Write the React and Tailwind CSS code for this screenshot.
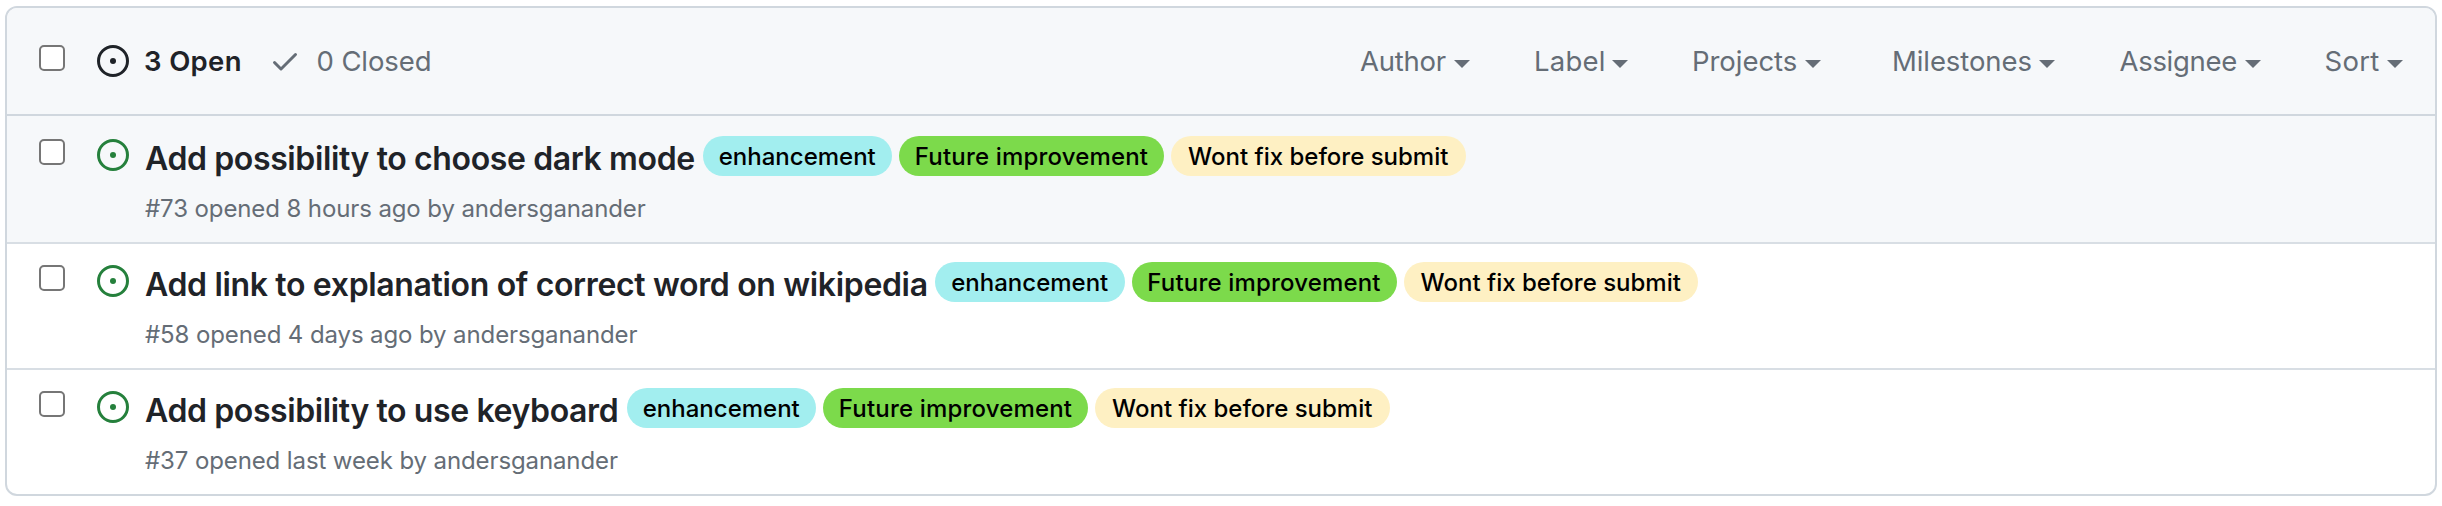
const filters = [
  { name: "Author", box: "w-[110px]", text: "tracking-[-0.25px]" },
  { name: "Label", box: "ml-[64px] w-[94px]", text: "tracking-[0.2px]" },
  { name: "Projects", box: "ml-[64px] w-[129px]", text: "tracking-[-0.05px]" },
  { name: "Milestones", box: "ml-[71px] w-[163px]", text: "tracking-[-0.08px]" },
  { name: "Assignee", box: "ml-[64.5px] w-[141.5px]", text: "tracking-[-0.3px]" },
  { name: "Sort", box: "ml-[63.5px] w-[78.5px]", text: "tracking-[0.3px]" },
];

const labels = [
  { name: "enhancement", style: "w-[189.5px] bg-[#a2eeef]" },
  { name: "Future improvement", style: "w-[265px] bg-[#7cda4b] tracking-[0.17px]" },
  { name: "Wont fix before submit", style: "w-[294.5px] bg-[#fef0c3]" },
];

const issues = [
  {
    title: "Add possibility to choose dark mode",
    width: "w-[557.5px]",
    tracking: "tracking-[-0.38px]",
    meta: "#73 opened 8 hours ago by andersganander",
    row: "h-[126px] bg-[#f6f8fa]",
  },
  {
    title: "Add link to explanation of correct word on wikipedia",
    width: "w-[790px]",
    tracking: "tracking-[-0.34px]",
    meta: "#58 opened 4 days ago by andersganander",
    row: "h-[126px] border-t-2 border-[#d8dee4]",
  },
  {
    title: "Add possibility to use keyboard",
    width: "w-[481.5px]",
    tracking: "tracking-[-0.39px]",
    meta: "#37 opened last week by andersganander",
    row: "h-[126px] border-t-2 border-[#d8dee4]",
  },
];

function Checkbox({ label, className }) {
  return (
    <input
      type="checkbox"
      aria-label={label}
      className={`size-[26px] shrink-0 appearance-none rounded-[5px] border-2 border-[#767676] bg-white ${className}`}
    />
  );
}

function OpenIcon({ className }) {
  return (
    <svg viewBox="0 0 16 16" fill="currentColor" className={`size-8 shrink-0 ${className}`}>
      <path d="M8 9.5a1.5 1.5 0 1 0 0-3 1.5 1.5 0 0 0 0 3Z" />
      <path d="M8 0a8 8 0 1 1 0 16A8 8 0 0 1 8 0ZM1.5 8a6.5 6.5 0 1 0 13 0 6.5 6.5 0 0 0-13 0Z" />
    </svg>
  );
}

function CheckIcon({ className }) {
  return (
    <svg viewBox="0 0 16 16" fill="currentColor" className={`size-8 shrink-0 ${className}`}>
      <path d="M13.78 4.22a.75.75 0 0 1 0 1.06l-7.25 7.25a.75.75 0 0 1-1.06 0L2.22 9.28a.751.751 0 0 1 .018-1.042.751.751 0 0 1 1.042-.018L6 10.94l6.72-6.72a.75.75 0 0 1 1.06 0Z" />
    </svg>
  );
}

function Caret() {
  return (
    <svg viewBox="0 0 16 8" fill="currentColor" className="mt-1.5 h-2 w-4 shrink-0">
      <path d="M0 0h16L8 8Z" />
    </svg>
  );
}

function Header() {
  return (
    <div className="flex h-[108px] items-center border-b-2 border-[#d0d7de] bg-[#f6f8fa] pr-8 pl-8 text-[27.5px] leading-[42px] whitespace-nowrap text-[#656d76]">
      <Checkbox label="Select all issues" className="mb-1.5" />
      <a className="ml-8 flex items-center font-semibold text-[#1f2328]">
        <OpenIcon className="" />
        <span className="ml-[15px] w-[98px] tracking-[0.35px]">3 Open</span>
      </a>
      <a className="ml-[27px] flex items-center">
        <CheckIcon className="" />
        <span className="ml-[15.5px] tracking-[-0.1px]">0 Closed</span>
      </a>
      <div className="ml-auto flex">
        {filters.map((f) => (
          <button key={f.name} className={`flex shrink-0 items-center justify-between ${f.box}`}>
            <span className={f.text}>{f.name}</span>
            <Caret />
          </button>
        ))}
      </div>
    </div>
  );
}

function IssueRow({ issue, first }) {
  return (
    <div className={`flex items-start pl-8 whitespace-nowrap ${issue.row}`}>
      <Checkbox label={issue.title} className={first ? "mt-[23px]" : "mt-[21px]"} />
      <OpenIcon className={`ml-8 text-[#25803c] ${first ? "mt-[23px]" : "mt-[21px]"}`} />
      <div className={`ml-4 ${first ? "pt-5" : "pt-[18px]"}`}>
        <div className="flex h-10">
          <a className={`pt-[3px] text-[32px] leading-10 font-semibold text-[#1f2328] ${issue.width} ${issue.tracking}`}>
            {issue.title}
          </a>
          <div className="flex gap-[7px]">
            {labels.map((l) => (
              <span
                key={l.name}
                className={`h-10 rounded-full text-center text-2xl leading-[42px] font-medium text-black ${l.style}`}
              >
                {l.name}
              </span>
            ))}
          </div>
        </div>
        <div className="mt-[15px] text-2xl leading-9 tracking-[-0.11px] text-[#656d76]">{issue.meta}</div>
      </div>
    </div>
  );
}

export default function App() {
  return (
    <main className="h-[506px] bg-white pt-1.5 pr-[5px] pl-[5px] font-['Inter',sans-serif]">
      <section className="h-[490px] overflow-hidden rounded-xl border-2 border-[#d0d7de] bg-white">
        <Header />
        {issues.map((issue, i) => (
          <IssueRow key={issue.title} issue={issue} first={i === 0} />
        ))}
      </section>
    </main>
  );
}
